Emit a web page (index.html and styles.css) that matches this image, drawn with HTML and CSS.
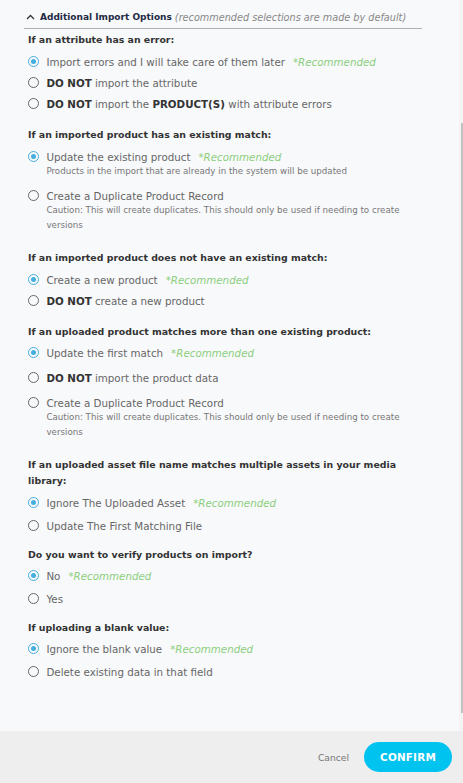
FILE: index.html
```html
<!DOCTYPE html>
<html>
<head>
<meta charset="utf-8">
<link rel="stylesheet" href="styles.css">
</head>
<body>
<div class="main">
  <div class="content">
    <div class="header">
      <svg class="caret" width="9" height="6" viewBox="0 0 9 6"><path d="M1 5 L4.5 1.5 L8 5" fill="none" stroke="#333" stroke-width="1.3"/></svg>
      <span class="htitle">Additional Import Options</span>
      <span class="hnote">(recommended selections are made by default)</span>
    </div>

    <div class="section">
      <div class="qtitle">If an attribute has an error:</div>
      <div class="opt"><span class="radio on"></span><span class="label">Import errors and I will take care of them later<span class="rec">*Recommended</span></span></div>
      <div class="opt"><span class="radio"></span><span class="label"><b>DO NOT</b> import the attribute</span></div>
      <div class="opt"><span class="radio"></span><span class="label"><b>DO NOT</b> import the <b>PRODUCT(S)</b> with attribute errors</span></div>
    </div>

    <div class="section tall">
      <div class="qtitle">If an imported product has an existing match:</div>
      <div class="opt wide hassub"><span class="radio on"></span><div class="label">Update the existing product<span class="rec">*Recommended</span><div class="sub">Products in the import that are already in the system will be updated</div></div></div>
      <div class="opt wide"><span class="radio"></span><div class="label">Create a Duplicate Product Record<div class="sub">Caution: This will create duplicates. This should only be used if needing to create versions</div></div></div>
    </div>

    <div class="section">
      <div class="qtitle">If an imported product does not have an existing match:</div>
      <div class="opt"><span class="radio on"></span><span class="label">Create a new product<span class="rec">*Recommended</span></span></div>
      <div class="opt"><span class="radio"></span><span class="label"><b>DO NOT</b> create a new product</span></div>
    </div>

    <div class="section tall">
      <div class="qtitle tight">If an uploaded product matches more than one existing product:</div>
      <div class="opt wide"><span class="radio on"></span><span class="label">Update the first match<span class="rec">*Recommended</span></span></div>
      <div class="opt wide"><span class="radio"></span><span class="label"><b>DO NOT</b> import the product data</span></div>
      <div class="opt wide"><span class="radio"></span><div class="label">Create a Duplicate Product Record<div class="sub">Caution: This will create duplicates. This should only be used if needing to create versions</div></div></div>
    </div>

    <div class="section compact">
      <div class="qtitle">If an uploaded asset file name matches multiple assets in your media library:</div>
      <div class="opt roomy"><span class="radio on"></span><span class="label">Ignore The Uploaded Asset<span class="rec">*Recommended</span></span></div>
      <div class="opt roomy"><span class="radio"></span><span class="label">Update The First Matching File</span></div>
    </div>

    <div class="section compact">
      <div class="qtitle tight">Do you want to verify products on import?</div>
      <div class="opt roomy"><span class="radio on"></span><span class="label">No<span class="rec">*Recommended</span></span></div>
      <div class="opt roomy"><span class="radio"></span><span class="label">Yes</span></div>
    </div>

    <div class="section compact">
      <div class="qtitle tight">If uploading a blank value:</div>
      <div class="opt roomy"><span class="radio on"></span><span class="label">Ignore the blank value<span class="rec">*Recommended</span></span></div>
      <div class="opt roomy"><span class="radio"></span><span class="label">Delete existing data in that field</span></div>
    </div>
  </div>
  <div class="scrollbar"><div class="thumb"></div></div>
</div>
<div class="footer">
  <span class="cancel">Cancel</span>
  <span class="confirm">CONFIRM</span>
</div>
</body>
</html>
```
FILE: styles.css
```css
html, body {
  margin: 0;
  padding: 0;
}
body {
  width: 463px;
  height: 783px;
  overflow: hidden;
  font-family: "DejaVu Sans", "Noto Sans", sans-serif;
  background: #eeeeee;
  color: #666;
}
.main {
  display: flex;
  height: 731px;
  background: #f8f9fb;
}
.content {
  flex: 1;
  padding: 10px 0 0 0;
  overflow: hidden;
}
.scrollbar {
  width: 4px;
  background: #f4f4f4;
  display: flex;
  justify-content: flex-end;
}
.thumb {
  width: 2px;
  margin-top: 123px;
  height: 590px;
  background: #c1c1c1;
}
.header {
  margin: 0 37px 0 24px;
  padding: 0 0 4px 2px;
  border-bottom: 1px solid #b0b0b0;
  display: flex;
  align-items: center;
  height: 14px;
  white-space: nowrap;
}
.caret {
  margin-right: 5px;
}
.htitle {
  font-weight: bold;
  font-size: 9px;
  color: #1f2a44;
  margin-right: 3px;
}
.hnote {
  font-style: italic;
  font-size: 9.7px;
  color: #888;
}
.section {
  padding: 0 28px;
  margin-bottom: 13px;
}
.section.tall {
  margin-bottom: 17px;
}
.section.compact {
  margin-bottom: 11px;
}
.header + .section {
  margin-top: 3px;
}
.qtitle {
  font-size: 9.4px;
  font-weight: bold;
  color: #333;
  line-height: 16px;
  margin-bottom: 4px;
}
.qtitle.tight {
  margin-bottom: 3px;
}
.opt {
  display: flex;
  align-items: flex-start;
  margin-bottom: 1px;
}
.opt.wide {
  margin-bottom: 5px;
}
.opt.hassub {
  margin-bottom: 7px;
}
.opt.roomy {
  margin-bottom: 3px;
}
.opt.roomy:last-child {
  margin-bottom: 0;
}
.radio {
  flex: none;
  width: 9.4px;
  height: 9.4px;
  border: 1.3px solid #666;
  border-radius: 50%;
  margin: 4px 7px 0 0;
  box-sizing: content-box;
  display: flex;
  align-items: center;
  justify-content: center;
}
.radio.on {
  border-color: #45aee0;
}
.radio.on::after {
  content: "";
  width: 5.4px;
  height: 5.4px;
  border-radius: 50%;
  background: #45aee0;
}
.label {
  font-size: 10.3px;
  line-height: 20px;
  color: #666;
}
.label b {
  color: #333;
}
.rec {
  font-style: italic;
  color: #8ccf7e;
  margin-left: 8px;
}
.sub {
  font-size: 8.7px;
  line-height: 15px;
  color: #777;
  margin-top: -3px;
  padding-right: 20px;
}
.footer {
  height: 52px;
  display: flex;
  align-items: center;
  justify-content: flex-end;
  padding-right: 11px;
  background: #eeeeee;
}
.cancel {
  font-size: 9.2px;
  color: #777;
  margin-right: 15px;
}
.confirm {
  width: 88px;
  height: 30px;
  border-radius: 15px;
  background: #00c3f0;
  color: #fff;
  font-weight: bold;
  font-size: 10.4px;
  display: flex;
  align-items: center;
  justify-content: center;
  letter-spacing: 0.2px;
}
```
